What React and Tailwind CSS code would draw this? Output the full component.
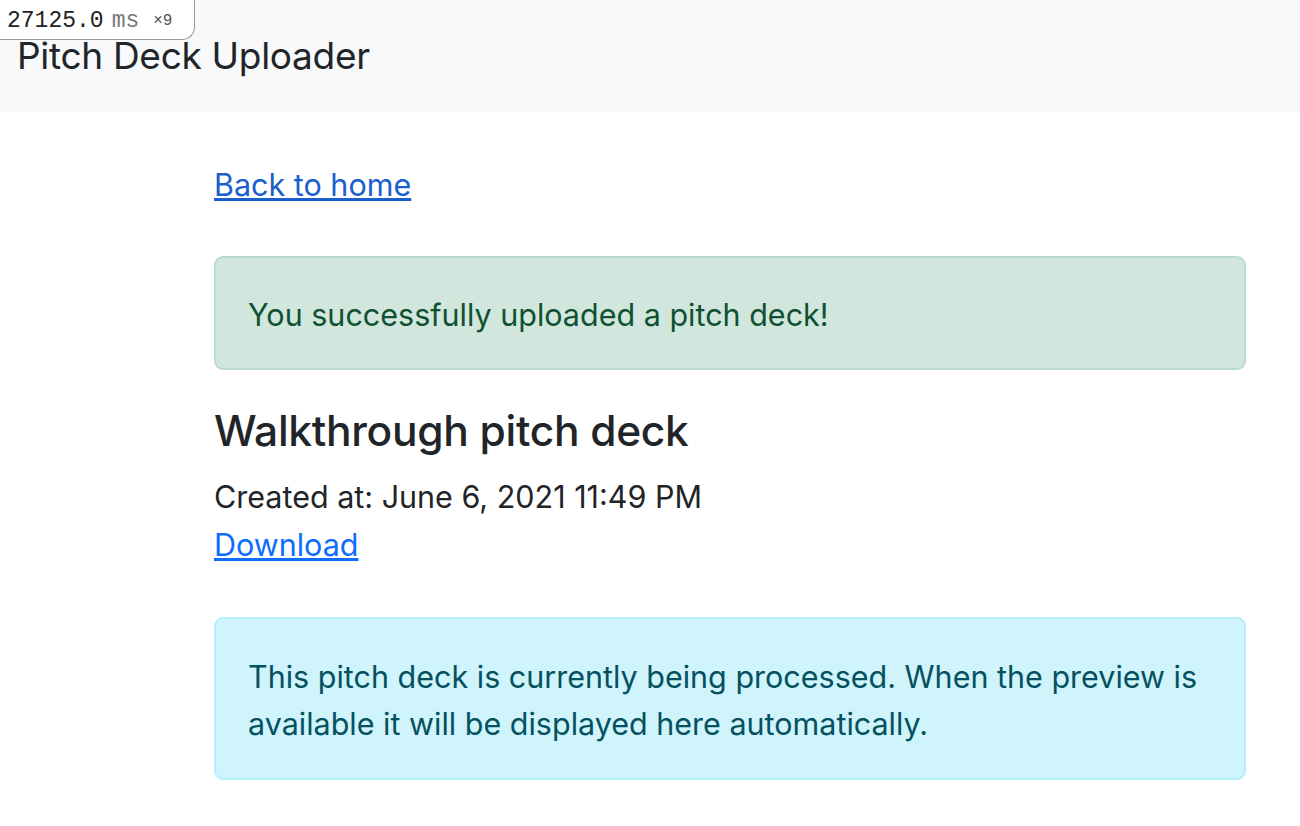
import React from 'react';

// ── Pitch deck page ────────────────────────────────────────────
const App = () => {
  return (
    <div className="relative min-h-screen bg-white text-[#212529] font-['Inter',sans-serif]">
      {/* timing badge */}
      <div className="absolute top-0 left-0 h-[40px] w-[195px] flex items-center pl-[7px] pt-[3px] bg-white border-r border-b border-[#999] rounded-br-[13px] font-['Liberation_Mono',monospace] text-[#222]">
        <span className="text-[23px] leading-none">27125.0</span>
        <span className="text-[23px] leading-none text-[#777] ml-[8px]">ms</span>
        <span className="text-[16px] leading-none text-[#555] ml-[14px]">×9</span>
      </div>

      {/* ── Navbar ─────────────────────────────────────────── */}
      <nav className="h-[112px] bg-[#f8f9fa] flex items-center pl-[17px]">
        <span className="text-[37px] tracking-[-0.3px]">Pitch Deck Uploader</span>
      </nav>

      {/* ── Content ────────────────────────────────────────── */}
      <main className="ml-[214px] w-[1032px] pt-[49px]">
        <a href="#" className="text-[30.5px] leading-[48px] text-[#1a5fcc] underline">Back to home</a>

        <div className="mt-[47px] h-[114px] flex items-center px-[32px] pt-[4px] bg-[#d1e7dd] border-2 border-[#badbcc] rounded-[9px] text-[#0f5132] text-[30.5px]">
          You successfully uploaded a pitch deck!
        </div>

        <h2 className="mt-[33px] text-[42.5px] font-medium leading-[56px] tracking-[-0.3px]">Walkthrough pitch deck</h2>
        <p className="mt-[14px] text-[30.5px] leading-[48px]">Created at: June 6, 2021 11:49 PM</p>
        <a href="#" className="block text-[30.5px] leading-[48px] text-[#0d6efd] underline">Download</a>

        <div className="mt-[48px] pt-[34px] pb-[31px] px-[32px] bg-[#cff4fc] border-2 border-[#b6effb] rounded-[9px] text-[#055160] text-[30.5px] leading-[47px]">
          This pitch deck is currently being processed. When the preview is available it will be displayed here automatically.
        </div>
      </main>
    </div>
  );
};

export default App;
